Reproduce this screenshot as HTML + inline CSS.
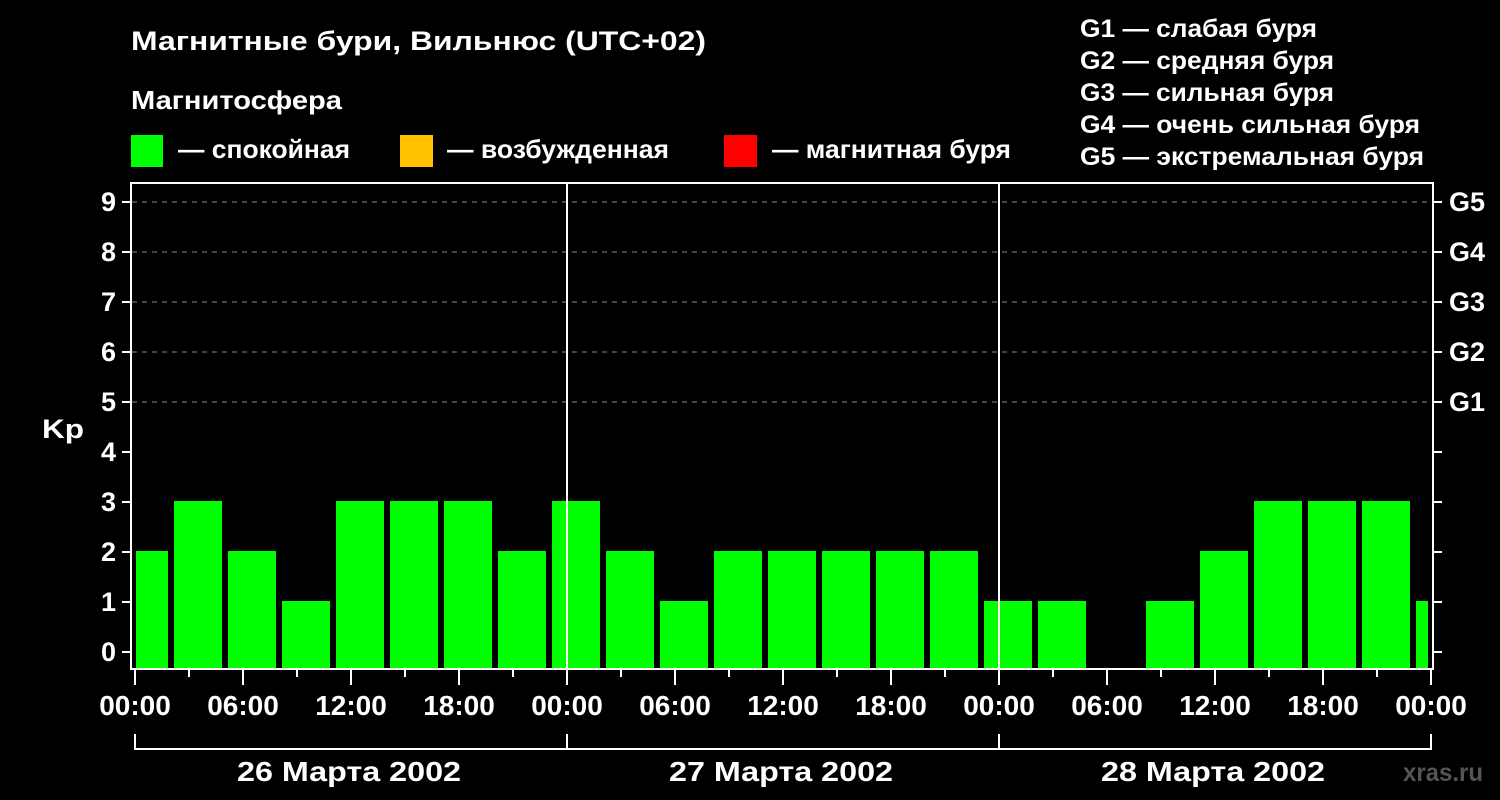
<!DOCTYPE html>
<html><head><meta charset="utf-8"><style>body{margin:0;background:#000}svg{display:block}text{font-family:"Liberation Sans",Arial,sans-serif;font-weight:bold;fill:#fff}</style></head><body>
<svg width="1500" height="800" viewBox="0 0 1500 800">
<rect width="1500" height="800" fill="#000"/>
<text x="131" y="50" font-size="27" textLength="575" lengthAdjust="spacingAndGlyphs">Магнитные бури, Вильнюс (UTC+02)</text>
<text x="131" y="109" font-size="26" textLength="211" lengthAdjust="spacingAndGlyphs">Магнитосфера</text>
<rect x="131" y="135" width="32" height="32" fill="#00ff00"/>
<text x="178" y="158" font-size="26" textLength="172" lengthAdjust="spacingAndGlyphs">— спокойная</text>
<rect x="400" y="135" width="33" height="32" fill="#ffc000"/>
<text x="447" y="158" font-size="26" textLength="222" lengthAdjust="spacingAndGlyphs">— возбужденная</text>
<rect x="724" y="135" width="33" height="32" fill="#ff0000"/>
<text x="772" y="158" font-size="26" textLength="239" lengthAdjust="spacingAndGlyphs">— магнитная буря</text>
<g font-size="25">
<text x="1080" y="37" textLength="237" lengthAdjust="spacingAndGlyphs">G1 — слабая буря</text>
<text x="1080" y="69" textLength="254" lengthAdjust="spacingAndGlyphs">G2 — средняя буря</text>
<text x="1080" y="101" textLength="254" lengthAdjust="spacingAndGlyphs">G3 — сильная буря</text>
<text x="1080" y="133" textLength="340" lengthAdjust="spacingAndGlyphs">G4 — очень сильная буря</text>
<text x="1080" y="165" textLength="344" lengthAdjust="spacingAndGlyphs">G5 — экстремальная буря</text>
</g>
<g stroke="#888" stroke-width="1" stroke-dasharray="5,5">
<line x1="132" y1="202" x2="1432" y2="202"/><line x1="132" y1="252" x2="1432" y2="252"/><line x1="132" y1="302" x2="1432" y2="302"/><line x1="132" y1="352" x2="1432" y2="352"/><line x1="132" y1="402" x2="1432" y2="402"/>
</g>
<g fill="#00ff00">
<rect x="136" y="551" width="32" height="117"/>
<rect x="174" y="501" width="48" height="167"/>
<rect x="228" y="551" width="48" height="117"/>
<rect x="282" y="601" width="48" height="67"/>
<rect x="336" y="501" width="48" height="167"/>
<rect x="390" y="501" width="48" height="167"/>
<rect x="444" y="501" width="48" height="167"/>
<rect x="498" y="551" width="48" height="117"/>
<rect x="552" y="501" width="48" height="167"/>
<rect x="606" y="551" width="48" height="117"/>
<rect x="660" y="601" width="48" height="67"/>
<rect x="714" y="551" width="48" height="117"/>
<rect x="768" y="551" width="48" height="117"/>
<rect x="822" y="551" width="48" height="117"/>
<rect x="876" y="551" width="48" height="117"/>
<rect x="930" y="551" width="48" height="117"/>
<rect x="984" y="601" width="48" height="67"/>
<rect x="1038" y="601" width="48" height="67"/>
<rect x="1146" y="601" width="48" height="67"/>
<rect x="1200" y="551" width="48" height="117"/>
<rect x="1254" y="501" width="48" height="167"/>
<rect x="1308" y="501" width="48" height="167"/>
<rect x="1362" y="501" width="48" height="167"/>
<rect x="1416" y="601" width="12" height="67"/>
</g>
<g stroke="#fff" stroke-width="2" fill="none">
<rect x="131" y="183" width="1302" height="486"/>
<line x1="567" y1="183" x2="567" y2="668"/><line x1="999" y1="183" x2="999" y2="668"/>
<path d="M135 734V749H1431V734M567 734V749M999 734V749"/>
<path d="M122 652H131M122 602H131M122 552H131M122 502H131M122 452H131M122 402H131M122 352H131M122 302H131M122 252H131M122 202H131"/>
<path d="M1433 652H1442M1433 602H1442M1433 552H1442M1433 502H1442M1433 452H1442M1433 402H1442M1433 352H1442M1433 302H1442M1433 252H1442M1433 202H1442"/>
<path d="M135 669V685M189 669V677M243 669V685M297 669V677M351 669V685M405 669V677M459 669V685M513 669V677M567 669V685M621 669V677M675 669V685M729 669V677M783 669V685M837 669V677M891 669V685M945 669V677M999 669V685M1053 669V677M1107 669V685M1161 669V677M1215 669V685M1269 669V677M1323 669V685M1377 669V677M1431 669V685"/>
</g>
<g font-size="27" text-anchor="end">
<text x="116" y="661">0</text><text x="116" y="611">1</text><text x="116" y="561">2</text><text x="116" y="511">3</text><text x="116" y="461">4</text><text x="116" y="411">5</text><text x="116" y="361">6</text><text x="116" y="311">7</text><text x="116" y="261">8</text><text x="116" y="211">9</text>
</g>
<text x="42" y="438" font-size="27" textLength="42" lengthAdjust="spacingAndGlyphs">Kp</text>
<g font-size="27"><text x="1449" y="411">G1</text><text x="1449" y="361">G2</text><text x="1449" y="311">G3</text><text x="1449" y="261">G4</text><text x="1449" y="211">G5</text></g>
<g font-size="28" text-anchor="middle">
<text x="135" y="715">00:00</text><text x="243" y="715">06:00</text><text x="351" y="715">12:00</text><text x="459" y="715">18:00</text>
<text x="567" y="715">00:00</text><text x="675" y="715">06:00</text><text x="783" y="715">12:00</text><text x="891" y="715">18:00</text>
<text x="999" y="715">00:00</text><text x="1107" y="715">06:00</text><text x="1215" y="715">12:00</text><text x="1323" y="715">18:00</text><text x="1431" y="715">00:00</text>
<text x="349" y="781" font-size="28" textLength="224" lengthAdjust="spacingAndGlyphs">26 Марта 2002</text><text x="781" y="781" font-size="28" textLength="224" lengthAdjust="spacingAndGlyphs">27 Марта 2002</text><text x="1213" y="781" font-size="28" textLength="224" lengthAdjust="spacingAndGlyphs">28 Марта 2002</text>
</g>
<text x="1403" y="781" font-size="25" style="fill:#555" textLength="80" lengthAdjust="spacingAndGlyphs">xras.ru</text>
</svg>
</body></html>
